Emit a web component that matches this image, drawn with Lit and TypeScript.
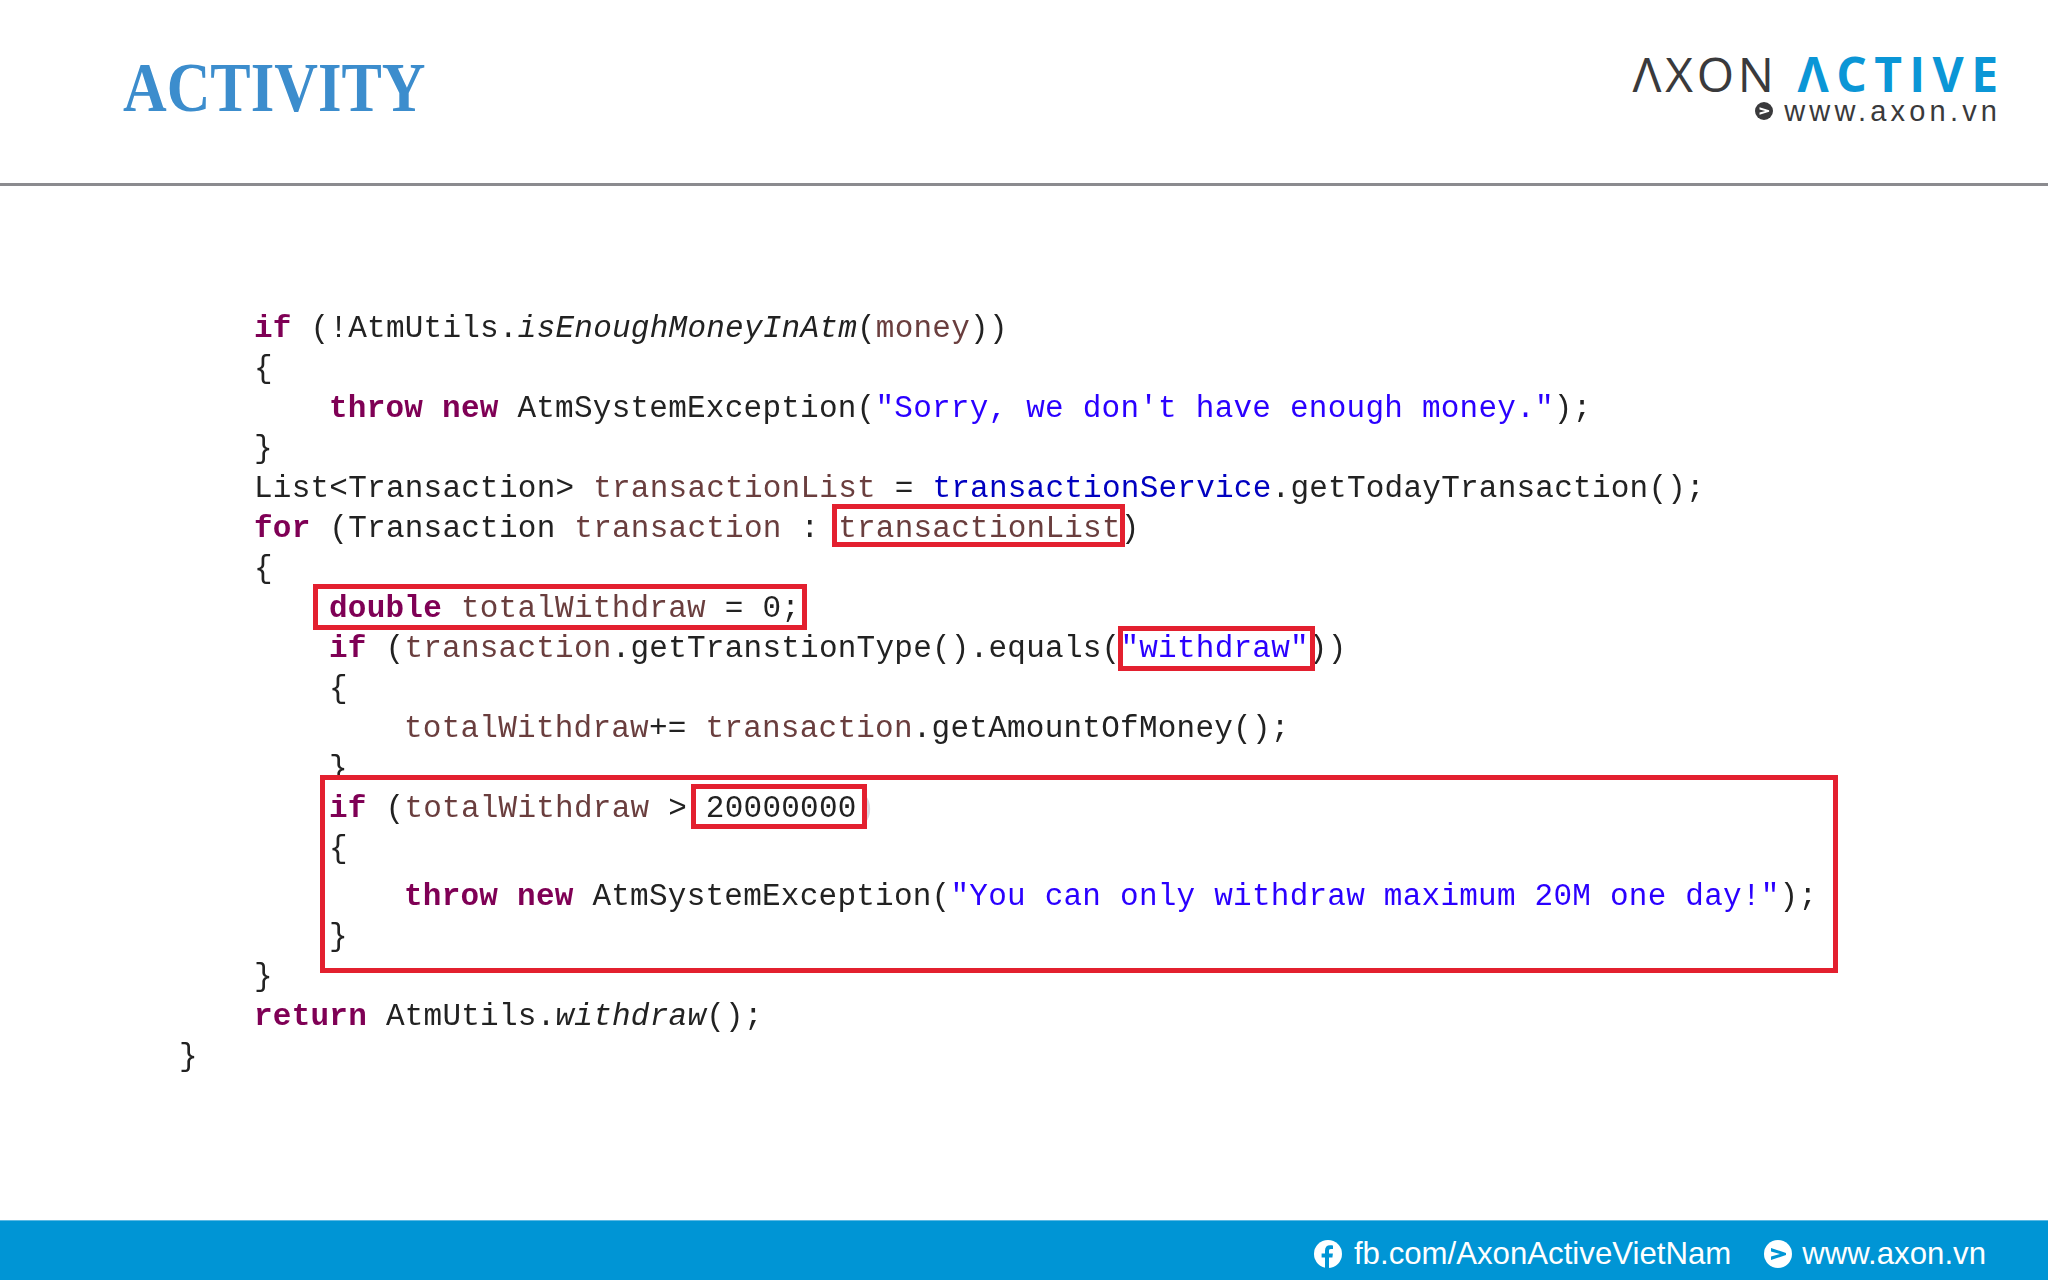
import { LitElement, html, css } from "lit";
import { customElement } from "lit/decorators.js";

type Tok = [string, string?];
interface Line { indent: number; toks: Tok[]; cls?: string }

const lines: Line[] = [
  { indent: 1, toks: [["if", "k"], [" (!AtmUtils."], ["isEnoughMoneyInAtm", "i"], ["("], ["money", "v"], ["))"]] },
  { indent: 1, toks: [["{"]] },
  { indent: 2, toks: [["throw", "k"], [" "], ["new", "k"], [" AtmSystemException("], ['"Sorry, we don\'t have enough money."', "s"], [");"]] },
  { indent: 1, toks: [["}"]] },
  { indent: 1, toks: [["List<Transaction> "], ["transactionList", "v"], [" = "], ["transactionService", "f"], [".getTodayTransaction();"]] },
  { indent: 1, toks: [["for", "k"], [" (Transaction "], ["transaction", "v"], [" : "], ["transactionList", "v"], [")"]] },
  { indent: 1, toks: [["{"]] },
  { indent: 2, toks: [["double", "k"], [" "], ["totalWithdraw", "v"], [" = 0;"]] },
  { indent: 2, toks: [["if", "k"], [" ("], ["transaction", "v"], [".getTranstionType().equals("], ['"withdraw"', "s"], ["))"]] },
  { indent: 2, toks: [["{"]] },
  { indent: 3, toks: [["totalWithdraw", "v"], ["+= "], ["transaction", "v"], [".getAmountOfMoney();"]] },
  { indent: 2, cls: "clip", toks: [["}"]] },
  { indent: 2, toks: [["if", "k"], [" ("], ["totalWithdraw", "v"], [" > 20000000"], [")", "faint"]] },
  { indent: 2, toks: [["{"]] },
  { indent: 3, cls: "gap", toks: [["throw", "k"], [" "], ["new", "k"], [" AtmSystemException("], ['"You can only withdraw maximum 20M one day!"', "s"], [");"]] },
  { indent: 2, toks: [["}"]] },
  { indent: 1, toks: [["}"]] },
  { indent: 1, toks: [["return", "k"], [" AtmUtils."], ["withdraw", "i"], ["();"]] },
  { indent: 0, toks: [["}"]] },
];

const MAIN_TOP = 186;
const boxes = [
  { l: 832, t: 504, r: 1125, b: 547 },
  { l: 313, t: 584, r: 807, b: 630 },
  { l: 1118, t: 626, r: 1315, b: 671 },
  { l: 320, t: 775, r: 1838, b: 973 },
  { l: 691, t: 784, r: 867, b: 829 },
];

@customElement("app-root")
export class AppRoot extends LitElement {
  static styles = css`
    :host { display: block; width: 2048px; height: 1280px; background: #fff; overflow: hidden; }
    .page { display: flex; flex-direction: column; width: 2048px; height: 1280px; }
    .header { height: 183px; flex: none; display: flex; justify-content: space-between; box-sizing: border-box; padding: 0 51px 0 123px; }
    .title { margin: 50px 0 0; font: bold 70px/76px "Liberation Serif", serif; color: #3c8dcd; transform: scaleX(0.864); transform-origin: left center; }
    .logo { display: flex; flex-direction: column; align-items: flex-end; padding-top: 52px; }
    .brand { display: flex; gap: 20px; font: 48px/44px "Open Sans", sans-serif; }
    .axon { color: #3a3a3c; letter-spacing: 3.7px; }
    .active { color: #0b96d6; font-weight: 700; letter-spacing: 7.4px; margin-right: -8.5px; }
    .url { display: flex; align-items: center; gap: 11px; font: 29px/30px "Liberation Sans", sans-serif; letter-spacing: 4.2px; color: #3a3a3c; margin-right: -4.2px; }
    .rule { height: 3px; flex: none; background: #8b8b8f; }
    .main { flex: 1; position: relative; box-sizing: border-box; padding: 123px 0 0 179px; }
    .line { height: 40px; font: 31px/40px "Liberation Mono", monospace; letter-spacing: 0.24px; white-space: pre; color: #222; filter: blur(0.4px); }
    .gap { margin-top: 8px; }
    .clip { height: 28px; margin-bottom: 12px; overflow: hidden; }
    .i1 { padding-left: 75px; } .i2 { padding-left: 150px; } .i3 { padding-left: 225px; }
    .k { color: #7f0055; font-weight: bold; }
    .v { color: #6a3e3e; }
    .s { color: #2a00ff; }
    .f { color: #0000c0; }
    .i { font-style: italic; }
    .faint { color: #d8d8e0; }
    .box { position: absolute; box-sizing: border-box; border: 5px solid #e3202f; }
    .footer { height: 60px; flex: none; box-sizing: border-box; border-top: 1px solid #5ab9e4; background: #0095d5; display: flex; justify-content: flex-end; align-items: center; padding: 7px 62px 0 0; color: #fff; font: 31.2px/52px "Liberation Sans", sans-serif; }
    .link { display: flex; align-items: center; gap: 12px; }
    .link + .link { margin-left: 33px; gap: 10px; }
    svg { display: block; flex: none; }
  `;

  private arrow(size: number, bg: string, fg: string) {
    return html`<svg width=${size} height=${size} viewBox="0 0 28 28">
      <circle cx="14" cy="14" r="14" fill=${bg}></circle>
      <path d="M7 8 L22 13 V15 L7 20 V16.5 L16 14 L7 11.5 Z" fill=${fg}></path>
    </svg>`;
  }

  render() {
    return html`<div class="page">
      <header class="header">
        <h1 class="title">ACTIVITY</h1>
        <div class="logo">
          <div class="brand"><span class="axon">ΛXON</span><span class="active">ΛCTIVE</span></div>
          <div class="url">${this.arrow(18, "#3a3a3c", "#fff")}<span>www.axon.vn</span></div>
        </div>
      </header>
      <div class="rule"></div>
      <main class="main">
        ${lines.map(
          (l) => html`<div class="line i${l.indent} ${l.cls ?? ""}">${l.toks.map(
            ([t, c]) => html`<span class=${c ?? ""}>${t}</span>`
          )}</div>`
        )}
        ${boxes.map(
          (b) => html`<div class="box" style="left:${b.l}px;top:${b.t - MAIN_TOP}px;width:${b.r - b.l}px;height:${b.b - b.t}px"></div>`
        )}
      </main>
      <footer class="footer">
        <div class="link">
          <svg width="28" height="28" viewBox="0 0 28 28">
            <circle cx="14" cy="14" r="14" fill="#fff"></circle>
            <path d="M11 28 V17.5 H7.6 V13.4 H11 V10.4 C11 7 13 5.2 16 5.2 C17.4 5.2 18.6 5.3 19 5.4 V9 H16.9 C15.3 9 15 9.8 15 10.9 V13.4 H18.9 L18.4 17.5 H15 V28 Z" fill="#0095d5"></path>
          </svg>
          <span>fb.com/AxonActiveVietNam</span>
        </div>
        <div class="link">
          ${this.arrow(28, "#fff", "#0095d5")}
          <span>www.axon.vn</span>
        </div>
      </footer>
    </div>`;
  }
}
